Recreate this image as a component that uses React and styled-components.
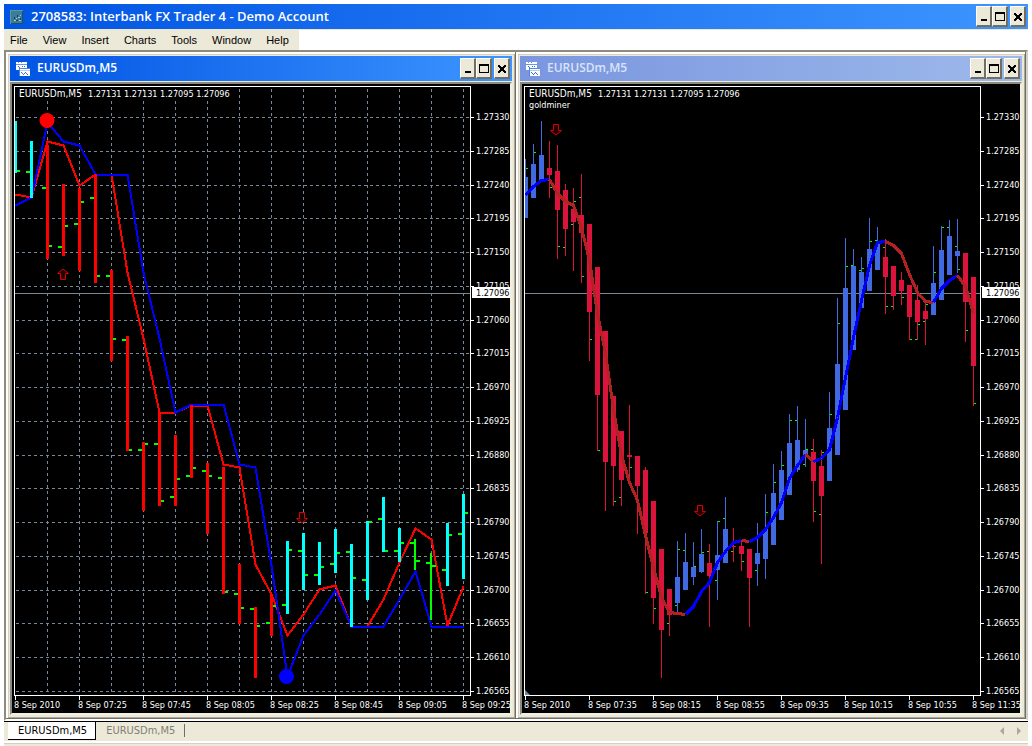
import React from 'react';
import styled, { createGlobalStyle } from 'styled-components';

const FIRST_X = 3.5;
const PLOT_RIGHT = 458.5;
const PLOT_BOTTOM = 611.5;
const PRICE_Y = 209.5;

const MENU = ['File', 'View', 'Insert', 'Charts', 'Tools', 'Window', 'Help'];

const PRICES = Array.from({ length: 18 }, (_, i) => ({
  label: ((127330 - i * 45) / 100000).toFixed(5),
  y: Math.round(33 + i * 33.75) + 0.5
}));

const LEFT_TIMES = ['2010', '07:25', '07:45', '08:05', '08:25', '08:45', '09:05', '09:25'];
const RIGHT_TIMES = ['2010', '07:35', '08:15', '08:55', '09:35', '10:15', '10:55', '11:35'];

// [color, high, low, open, close]
const BARS = [
  ['cyan', 37, 89, null, 87],
  ['cyan', 57, 114, 88, null],
  ['red', 61, 175, 104, 162],
  ['red', 100, 172, 163, 142],
  ['red', 104, 187, 140, 118],
  ['red', 90, 199, 114, 192],
  ['red', 186, 277, 192, 255],
  ['red', 252, 367, 256, 366],
  ['red', 358, 427, 366, 360],
  ['red', 329, 422, 360, 417],
  ['red', 351, 422, 413, 395],
  ['red', 321, 394, 392, 384],
  ['red', 379, 450, 387, 392],
  ['red', 383, 510, 394, 508],
  ['red', 480, 540, 510, 524],
  ['red', 523, 594, 525, 542],
  ['red', 510, 552, 539, 522],
  ['cyan', 457, 530, 521, 466],
  ['cyan', 449, 506, 467, 491],
  ['cyan', 458, 501, 491, 483],
  ['cyan', 445, 489, 480, 469],
  ['cyan', 460, 543, 468, 494],
  ['cyan', 437, 516, 496, 438],
  ['cyan', 413, 468, 435, 467],
  ['cyan', 444, 478, 467, 459],
  ['lime', 455, 486, 459, 477],
  ['lime', 469, 536, 479, 482],
  ['cyan', 439, 502, 486, 451],
  ['cyan', 410, 495, 450, 429]
];

const RED_LINE = [
  110, 113, 57, 61, 101, 90, 90, 188, 254, 328, 328, 321, 321, 380, 383,
  480, 510, 551, 530, 505, 501, 542, 542, 515, 478, 444, 455, 541, 502
];
const BLUE_LINE = [
  121, 113, 38, 57, 61, 90, 90, 90, 188, 254, 328, 320, 320, 320, 380,
  383, 481, 592, 551, 530, 506, 542, 542, 542, 515, 487, 542, 542, 542
];

// [up, high, low, body top, body bottom, left mark, right mark]
const CANDLES = [
  [1, 75, 134, 93, 134, null, 84],
  [1, 60, 114, 80, 114, null, 68],
  [1, 37, 98, 71, 98],
  [0, 57, 114, 84, 91, null, 103],
  [0, 61, 175, 87, 126, null, 162],
  [0, 100, 172, 106, 145, 163],
  [0, 104, 187, 125, 138, 140, 117],
  [0, 90, 199, 131, 149, 113, 192],
  [0, 140, 277, 140, 228, null, 255],
  [0, 183, 367, 183, 311, null, 366],
  [0, 247, 427, 247, 378],
  [0, 312, 422, 312, 382, null, 417],
  [0, 347, 422, 347, 396, 413],
  [0, 321, 396, 371, 373, null, 383],
  [0, 372, 450, 372, 402],
  [0, 383, 510, 386, 449, null, 508],
  [0, 417, 540, 417, 514, null, 524],
  [0, 465, 594, 465, 546],
  [0, 505, 552, 505, 531, 539],
  [1, 457, 528, 493, 519, 521, 465],
  [1, 449, 506, 478, 506, 466],
  [1, 458, 501, 483, 493, null, 482],
  [1, 445, 489, 470, 488, null, 468],
  [0, 460, 543, 479, 492, 467],
  [1, 437, 516, 471, 486, 496, 437],
  [1, 413, 479, 445, 479, 434],
  [0, 444, 478, 462, 463, 467],
  [0, 456, 487, 462, 470, null, 477],
  [0, 465, 543, 465, 494],
  [1, 439, 502, 469, 480, 486],
  [1, 410, 495, 445, 475, null, 428],
  [1, 380, 461, 409, 461, null, 398],
  [1, 367, 436, 386, 436, null, 381],
  [1, 330, 411, 359, 411, null, 336],
  [1, 322, 388, 356, 386, 336],
  [1, 335, 383, 366, 371, 380, 365],
  [0, 355, 438, 368, 397, 365, 427],
  [0, 366, 480, 382, 412, 430, 368],
  [1, 308, 397, 344, 397, null, 330],
  [1, 214, 371, 280, 371, null, 239],
  [1, 154, 326, 204, 326, null, 182],
  [1, 165, 266, 182, 266, 181],
  [1, 173, 224, 188, 224, 186, 184],
  [1, 134, 207, 165, 207, null, 157],
  [1, 143, 186, 160, 186, 156],
  [0, 155, 230, 173, 193, 163, 222],
  [0, 182, 226, 182, 212, 222],
  [0, 188, 221, 196, 207, null, 213],
  [0, 201, 256, 201, 233, null, 255],
  [0, 201, 256, 216, 238, 255, 240],
  [0, 217, 261, 227, 235, 237, 220],
  [1, 162, 231, 199, 231, null, 188],
  [1, 142, 216, 166, 216, null, 143],
  [1, 136, 191, 152, 191, 143],
  [1, 135, 189, 167, 172, 162, 185],
  [0, 169, 258, 169, 218, null, 246],
  [0, 193, 322, 193, 282, null, 319]
];

const AVERAGE = [
  { color: 'blue', from: 0, values: [111, 102, 96, 95] },
  {
    color: 'firebrick',
    from: 3,
    values: [95, 109, 117, 121, 143, 176, 229, 269, 325, 371, 398, 416, 451, 483, 513, 528, 529, 530]
  },
  { color: 'blue', from: 20, values: [530, 522, 507, 498, 478, 467, 458, 456] },
  { color: 'firebrick', from: 27, values: [456, 457] },
  { color: 'blue', from: 28, values: [457, 453, 445, 433, 418, 394, 381, 370] },
  { color: 'firebrick', from: 35, values: [370, 377] },
  { color: 'blue', from: 36, values: [377, 374, 365, 333, 293, 253, 216, 181, 158, 157] },
  { color: 'firebrick', from: 45, values: [157, 161, 169, 190, 208, 217, 218] },
  { color: 'blue', from: 51, values: [218, 204, 196, 191] },
  { color: 'firebrick', from: 54, values: [191, 202, 229] }
];

const toPoints = (values, step, from = 0) =>
  values.map((y, i) => `${FIRST_X + (from + i) * step},${y + 0.5}`).join(' ');

export default function App () {
  return (
    <>
      <GlobalStyle />
      <Page>
        <TitleBar $isActive>
          <AppIcon />
          <MainTitle>2708583: Interbank FX Trader 4 - Demo Account</MainTitle>
          <CaptionButtons />
        </TitleBar>
        <Menu>
          {MENU.map(item => <MenuItem key={item}>{item}</MenuItem>)}
        </Menu>
        <Workspace>
          <ChartWindow title="EURUSDm,M5" isActive>
            <BarChart />
          </ChartWindow>
          <ChartWindow title="EURUSDm,M5">
            <CandleChart />
          </ChartWindow>
        </Workspace>
        <TabBar>
          <Tab isActive>EURUSDm,M5</Tab>
          <Tab>EURUSDm,M5</Tab>
          <Separator />
          <Scroller>
            <ScrollButton aria-label="Scroll tabs left">
              <svg width="4" height="8"><path d="M4 0v8L0 4z" fill="#aca899" /></svg>
            </ScrollButton>
            <ScrollButton aria-label="Scroll tabs right">
              <svg width="4" height="8"><path d="M0 0v8L4 4z" fill="#aca899" /></svg>
            </ScrollButton>
          </Scroller>
        </TabBar>
        <StatusEdge />
      </Page>
    </>
  );
}

function ChartWindow ({ title, isActive, children }) {
  return (
    <WindowFrame>
      <TitleBar $isActive={isActive}>
        <ChartIcon />
        <WindowTitle $isActive={isActive}>{title}</WindowTitle>
        <CaptionButtons />
      </TitleBar>
      <Client>{children}</Client>
    </WindowFrame>
  );
}

function Tab ({ isActive, children }) {
  return (
    <TabButton $isActive={isActive} aria-pressed={!!isActive}>{children}</TabButton>
  );
}

function CaptionButtons () {
  return (
    <Buttons>
      <CaptionButton aria-label="Minimize">
        <svg width="12" height="14"><path d="M3 10h6v2H3z" /></svg>
      </CaptionButton>
      <CaptionButton aria-label="Maximize">
        <svg width="12" height="14"><path d="M1 3h10v9H1zM2 5v6h8V5z" fillRule="evenodd" /></svg>
      </CaptionButton>
      <CloseButton aria-label="Close">
        <svg width="12" height="14">
          <path d="M2 4h2v1h1v1h2V5h1V4h2v2H9v1H8v2h1v1h1v2H8v-1H7v-1H5v1H4v1H2v-2h1V9h1V7H3V6H2z" />
        </svg>
      </CloseButton>
    </Buttons>
  );
}

function AppIcon () {
  return (
    <svg width="16" height="16" shapeRendering="crispEdges">
      <path d="M1 1h13v14H1z" fill="#3b7c97" />
      <path d="M1 1h13v1H1zM1 1h1v14H1z" fill="#5b98ae" />
      <path d="M2 14h12v1H2zM13 2h1v13h-1z" fill="#1d5068" />
      <path d="M5 11h2v1H5zM7 9h1v1H7zM9 8h2v1H9zM11 6h1v1h-1zM10 11h2v1h-2z" fill="#a9cbd6" />
      <path d="M7 11h2v1H7zM5 8h1v2H5zM8 6h1v2H8zM11 9h1v2h-1z" fill="#173f59" />
    </svg>
  );
}

function ChartIcon () {
  return (
    <svg width="16" height="16" shapeRendering="crispEdges">
      <path d="M1 1h11v8H1z" fill="#fff" />
      <path d="M1 3h11v1H1zM3 1h1v1H3zM6 1h1v1H6z" fill="#6a96e8" />
      <path d="M3 5h1v1H3zM4 6h1v1H4zM7 5h1v1H7zM9 5h1v1H9z" fill="#3c6fd8" />
      <path d="M4 7h11v8H4z" fill="#4f86ea" />
      <path d="M5 8h10v7H5z" fill="#fff" />
      <path d="M5 9h10v1H5z" fill="#b5ccf5" />
      <path d="M6 11h1v1H6zM7 12h1v1H7zM8 13h1v1H8zM9 12h1v1H9zM10 11h1v1h-1zM11 12h1v1h-1zM12 13h1v1h-1z" fill="#3c6fd8" />
    </svg>
  );
}

function Axes ({ times }) {
  return (
    <>
      <g stroke="#fff" fill="none" shapeRendering="crispEdges">
        <path d={`M2.5 2.5H${PLOT_RIGHT}V${PLOT_BOTTOM}H2.5z`} />
        {PRICES.map(({ label, y }) => (
          <path key={label} d={`M${PLOT_RIGHT} ${y}h3`} />
        ))}
        {times.map((time, i) => (
          <path key={time} d={`M${FIRST_X + i * 64} ${PLOT_BOTTOM}v4`} />
        ))}
      </g>
      {PRICES.map(({ label, y }) => (
        <Label key={label} x="464" y={y + 2.5}>{label}</Label>
      ))}
      {times.map((time, i) => (
        <Label key={time} x={2 + i * 64} y="624">8 Sep {time}</Label>
      ))}
      <rect x="460" y="203" width="38" height="11" fill="#fff" />
      <Label x="464" y="212" $isDark>1.27096</Label>
    </>
  );
}

function Quote () {
  return (
    <>
      <rect x="6" y="6" width="213" height="10" fill="#000" />
      <SymbolLabel x="7" y="13">EURUSDm,M5</SymbolLabel>
      <Label x="76" y="13">1.27131 1.27131 1.27095 1.27096</Label>
    </>
  );
}

function Arrow ({ x, y, isUp }) {
  return (
    <path
      d="M-2.5 0.5h5v6h3l-5.5 4.5l-5.5 -4.5h3z"
      transform={`translate(${x} ${y}) ${isUp ? 'scale(1 -1)' : ''}`}
      fill="#200"
      stroke="#d80000"
    />
  );
}

function BarChart () {
  return (
    <Chart viewBox="0 0 498 629" role="img" aria-label="EURUSDm, M5 bar chart">
      <g stroke="#778899" strokeDasharray="3 3" shapeRendering="crispEdges">
        {PRICES.map(({ label, y }) => (
          <path key={label} d={`M4 ${y}H458`} />
        ))}
        {Array.from({ length: 14 }, (_, i) => (
          <path key={i} d={`M${35.5 + i * 32} 5V611`} />
        ))}
      </g>
      <path d={`M3 ${PRICE_Y}H458`} stroke="#778899" shapeRendering="crispEdges" />
      <Quote />
      <g fill="none" strokeWidth="2" shapeRendering="crispEdges">
        <polyline points={toPoints(RED_LINE, 16)} stroke="red" />
        <polyline points={toPoints(BLUE_LINE, 16)} stroke="blue" />
      </g>
      <g shapeRendering="crispEdges">
        {BARS.map(([color, high, low, open, close], i) => {
          const x = 3 + i * 16;
          return (
            <g key={i}>
              {open && <rect x={x - 5} y={open - 1} width="4" height="2" fill="lime" />}
              {close && <rect x={x + 1} y={close - 1} width="4" height="2" fill="lime" />}
              <rect
                x={i === 0 ? x : x - 1}
                y={high}
                width={i === 0 || color === 'lime' ? 2 : 3}
                height={low - high}
                fill={color}
              />
            </g>
          );
        })}
      </g>
      <circle cx="35" cy="36.5" r="7.5" fill="red" />
      <circle cx="274.5" cy="592.5" r="7.5" fill="blue" />
      <Arrow x={51} y={196} isUp />
      <Arrow x={290} y={428} />
      <Axes times={LEFT_TIMES} />
    </Chart>
  );
}

function CandleChart () {
  return (
    <Chart viewBox="0 0 498 629" role="img" aria-label="EURUSDm, M5 candlestick chart">
      <path d={`M3 ${PRICE_Y}H458`} stroke="#778899" shapeRendering="crispEdges" />
      <Quote />
      <Label x="7" y="24">goldminer</Label>
      <g shapeRendering="crispEdges">
        {CANDLES.map(([up, high, low, top, bottom, left, right], i) => {
          const x = 3 + i * 8;
          const color = up ? 'royalblue' : 'crimson';
          return (
            <g key={i}>
              <rect x={x} y={high} width="1" height={low - high} fill={color} />
              <rect
                x={i === 0 ? x : x - 2}
                y={top}
                width={i === 0 ? 3 : 5}
                height={bottom - top}
                fill={color}
              />
              {left && <rect x={x - 2} y={left} width="2" height="1" fill="lime" />}
              {right && <rect x={x + 1} y={right} width="2" height="1" fill="lime" />}
            </g>
          );
        })}
      </g>
      <g fill="none" strokeWidth="3" shapeRendering="crispEdges">
        {AVERAGE.map(({ color, from, values }) => (
          <polyline key={from} points={toPoints(values, 8, from)} stroke={color} />
        ))}
      </g>
      <Arrow x={34} y={40} />
      <Arrow x={178} y={421} />
      <path d="M3 606v5h5z" fill="#778899" />
      <Axes times={RIGHT_TIMES} />
    </Chart>
  );
}

const GlobalStyle = createGlobalStyle`
  * {
    box-sizing: border-box;
  }
  body {
    margin: 0;
    background-color: #fff;
    font-family: "Liberation Sans", Arial, sans-serif;
  }
  button {
    border: 0;
    padding: 0;
    background: none;
    font: inherit;
  }
  svg {
    display: block;
    flex: none;
  }
`;
const Page = styled.div`
  padding: 4px 4px 0;
`;
const TitleBar = styled.header`
  display: flex;
  align-items: center;
  gap: 6px;
  height: 26px;
  padding: 0 2px 0 5px;
  border-bottom: 1px solid #ece9d8;
  background: ${props => props.$isActive
    ? 'linear-gradient(90deg, #0054e3, #3d95ff)'
    : 'linear-gradient(90deg, #7a96df, #9db9eb)'};
`;
const MainTitle = styled.h1`
  flex: 1;
  margin: 0;
  padding-bottom: 2px;
  color: #fff;
  font-family: "Open Sans", "Noto Sans", sans-serif;
  font-size: 13px;
  font-weight: 600;
  line-height: 22px;
  white-space: nowrap;
`;
const WindowTitle = styled(MainTitle).attrs({ as: 'h2' })`
  color: ${props => props.$isActive ? '#fff' : '#d8e4f8'};
  font-size: 12px;
`;
const Buttons = styled.div`
  display: flex;
`;
const CaptionButton = styled.button`
  display: flex;
  align-items: center;
  justify-content: center;
  width: 16px;
  height: 21px;
  border: solid;
  border-width: 1px 2px 2px 1px;
  border-color: #fff #716f64 #716f64 #fff;
  background-color: #ece9d8;
`;
const CloseButton = styled(CaptionButton)`
  margin-left: 2px;
`;
const Menu = styled.nav`
  display: flex;
  gap: 15px;
  width: fit-content;
  height: 20px;
  padding: 0 10px 0 6px;
  background-color: #ece9d8;
`;
const MenuItem = styled.button`
  color: #000;
  font-size: 11px;
  line-height: 20px;
`;
const Workspace = styled.main`
  display: flex;
  align-items: flex-start;
  border: 2px solid;
  border-color: #8d8a7e #d4d0c8 #fff #8d8a7e;
  background-color: #808080;
`;
const WindowFrame = styled.section`
  flex: 1;
  min-width: 0;
  padding: 4px;
  background-color: #ece9d8;
  box-shadow:
    inset -1px -1px #716f64,
    inset 2px 2px #fff,
    inset -2px -2px #aca899,
    inset 3px 3px #d4d0c8;
`;
const Client = styled.div`
  border: 2px solid;
  border-color: #8d8a7e #f1efe2 #f1efe2 #8d8a7e;
  background-color: #000;
`;
const Chart = styled.svg`
  width: 100%;
  height: auto;
`;
const Label = styled.text`
  fill: ${props => props.$isDark ? '#000' : '#fff'};
  font-family: "DejaVu Sans Condensed", "DejaVu Sans", sans-serif;
  font-size: 9px;
`;
const SymbolLabel = styled(Label)`
  font-size: 10px;
`;
const TabBar = styled.footer`
  display: flex;
  align-items: flex-start;
  height: 20px;
  padding-left: 4px;
  border-top: 1px solid #000;
  background-color: #ece9d8;
`;
const TabButton = styled.button`
  height: 18px;
  padding: 0 8px 0 10px;
  border: solid ${props => props.$isActive ? '#000' : 'transparent'};
  border-width: 0 1px 1px 0;
  background-color: ${props => props.$isActive ? '#fff' : 'transparent'};
  color: ${props => props.$isActive ? '#000' : '#817e72'};
  font-family: "DejaVu Sans Condensed", "DejaVu Sans", sans-serif;
  font-size: 11px;
  line-height: 16px;
`;
const Separator = styled.span`
  width: 1px;
  height: 13px;
  margin-top: 2px;
  background-color: #716f64;
`;
const Scroller = styled.div`
  display: flex;
  gap: 13px;
  margin-left: auto;
  padding: 5px 7px 0 0;
`;
const ScrollButton = styled.button`
  display: block;
`;
const StatusEdge = styled.div`
  height: 5px;
  border-top: 2px solid #fff;
  box-shadow: inset 0 1px #d4d0c8;
  background-color: #ece9d8;
`;
